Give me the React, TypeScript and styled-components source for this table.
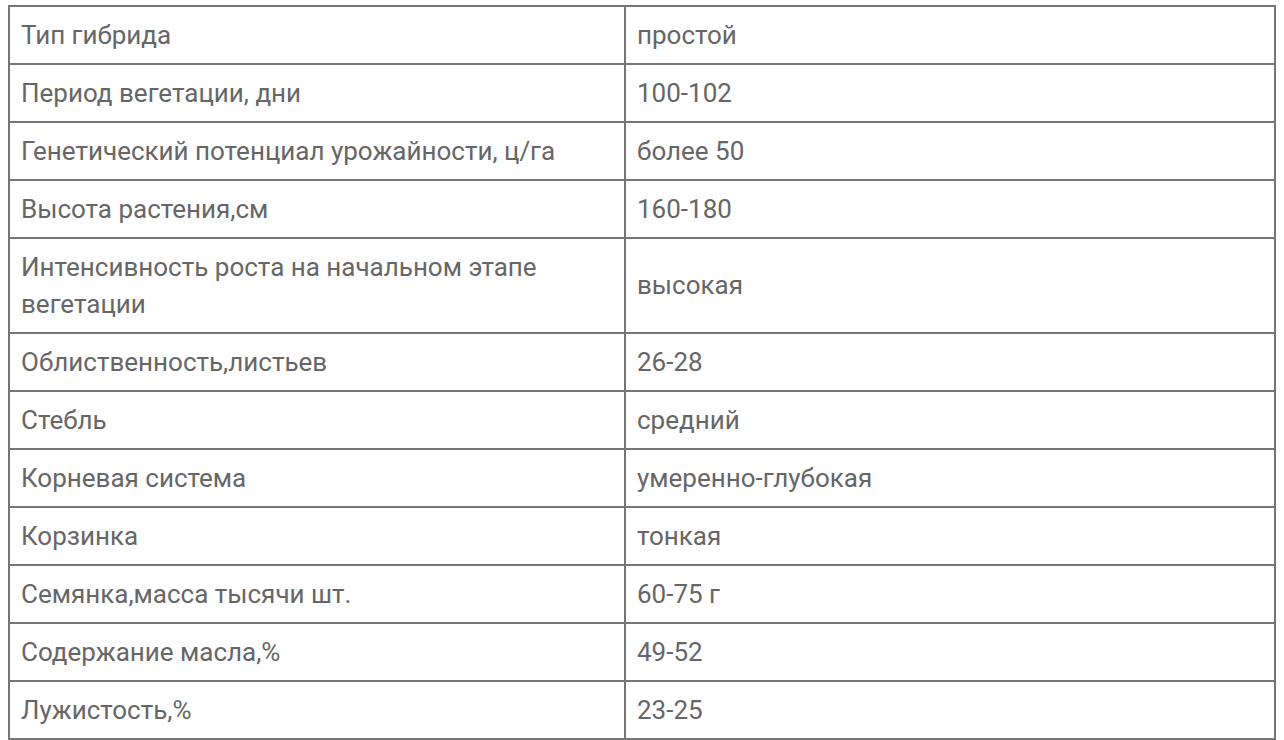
import React from 'react';
import styled, { createGlobalStyle } from 'styled-components';

const GlobalStyle = createGlobalStyle`
  body {
    margin: 5px 8px;
    background: #ffffff;
    font-family: Roboto, "Liberation Sans", sans-serif;
  }
`;

const SpecTable = styled.table`
  width: 100%;
  border-collapse: collapse;
  color: #666666;
  font-size: 26px;
  line-height: 37px;
`;

const Cell = styled.td<{ $first?: boolean }>`
  border: 2px solid #767676;
  padding: 9.5px 11px;
  vertical-align: middle;
  width: ${(p) => (p.$first ? '592px' : 'auto')};
`;

const rows: [string, string][] = [
  ['Тип гибрида', 'простой'],
  ['Период вегетации, дни', '100-102'],
  ['Генетический потенциал урожайности, ц/га', 'более 50'],
  ['Высота растения,см', '160-180'],
  ['Интенсивность роста на начальном этапе вегетации', 'высокая'],
  ['Облиственность,листьев', '26-28'],
  ['Стебль', 'средний'],
  ['Корневая система', 'умеренно-глубокая'],
  ['Корзинка', 'тонкая'],
  ['Семянка,масса тысячи шт.', '60-75 г'],
  ['Содержание масла,%', '49-52'],
  ['Лужистость,%', '23-25'],
];

export default function App() {
  return (
    <>
      <GlobalStyle />
      <SpecTable>
        <tbody>
          {rows.map(([name, value]) => (
            <tr key={name}>
              <Cell $first>{name}</Cell>
              <Cell>{value}</Cell>
            </tr>
          ))}
        </tbody>
      </SpecTable>
    </>
  );
}
